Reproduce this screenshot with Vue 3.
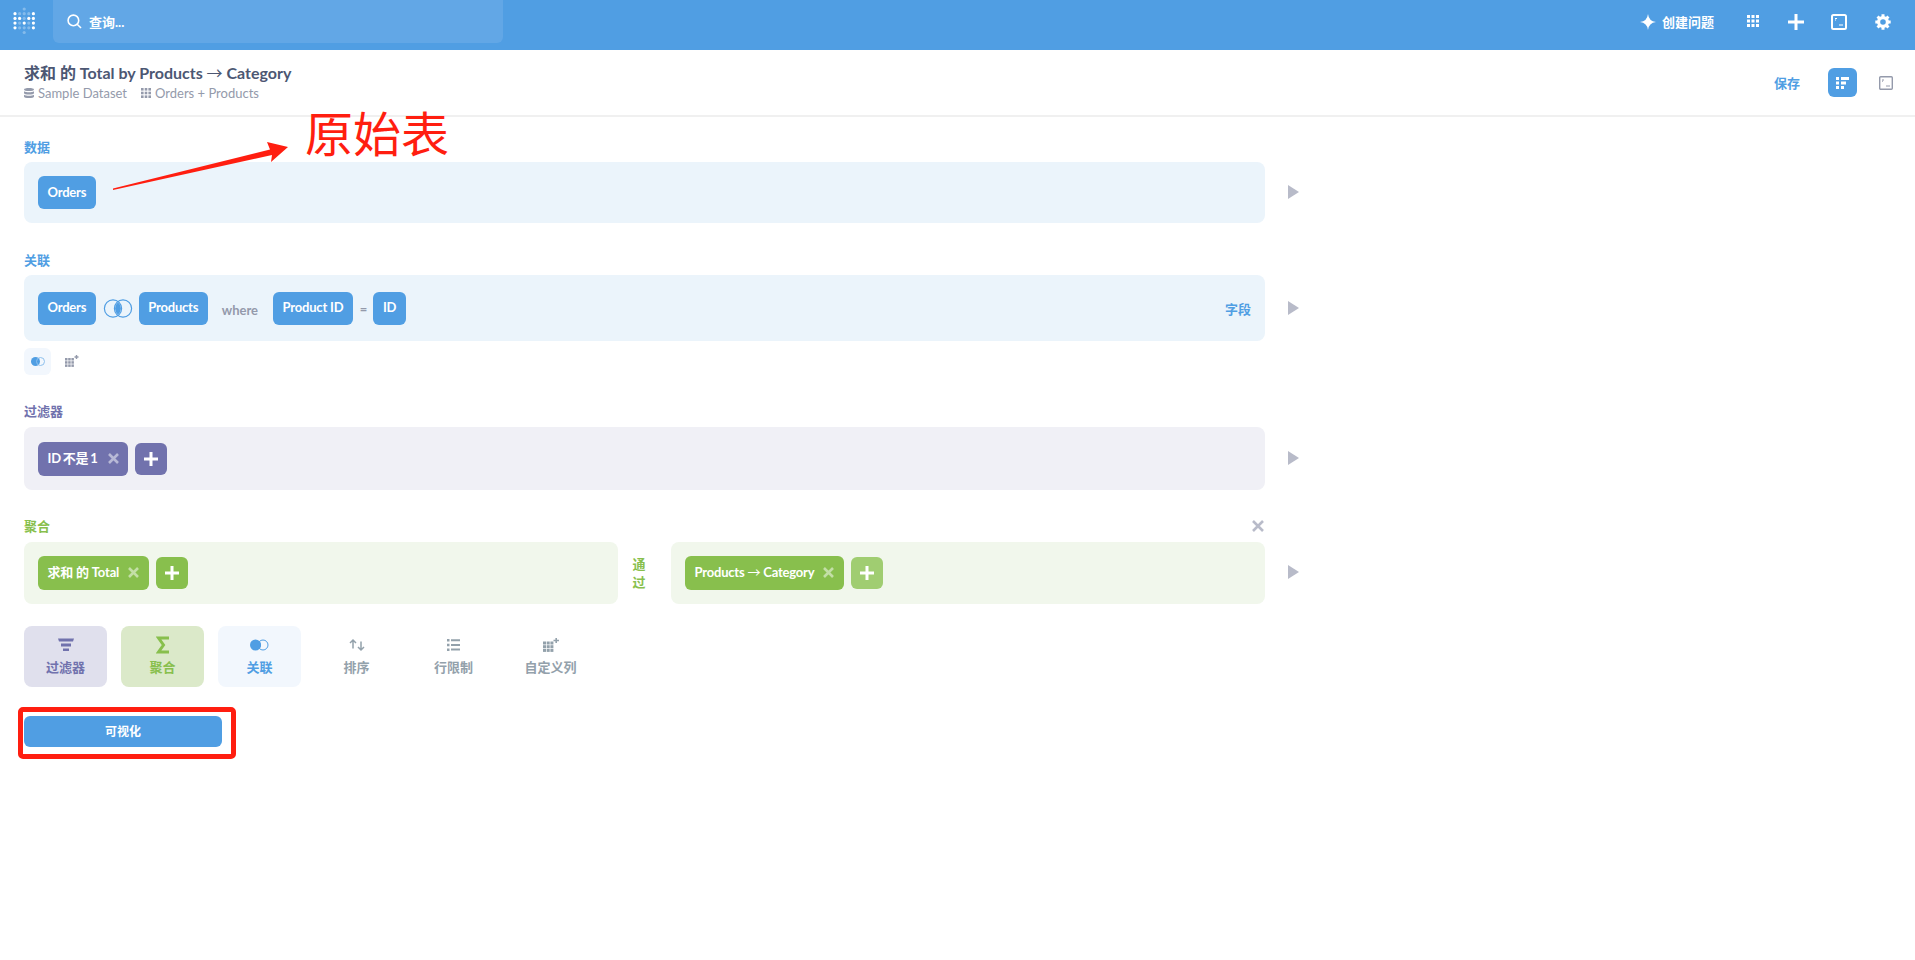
<template>
  <div class="page">
    <nav class="nav">
      <svg class="logo" width="24" height="30" viewBox="0 0 24 30">
        <circle v-for="d in logoDots" :key="d.x + '-' + d.y" :cx="d.x" :cy="d.y" r="1.6" fill="#fff" :opacity="d.o" />
      </svg>
      <div class="search">
        <svg width="15" height="15" viewBox="0 0 15 15" fill="none" stroke="#fff" stroke-width="1.6">
          <circle cx="6.4" cy="6.4" r="5.3" />
          <path d="M10.2 10.2 14 14" />
        </svg>
        <span>查询...</span>
      </div>
      <div class="nav-right">
        <svg class="spark" width="16" height="16" viewBox="0 0 16 16"><path d="M8 0Q8.800 7.200 16 8 8.800 8.800 8 16 7.200 8.800 0 8 7.200 7.200 8 0Z" fill="#fff" /></svg>
        <span class="ask">创建问题</span>
        <svg class="nav-grid" width="13" height="13" viewBox="0 0 13 13">
          <rect v-for="c in grid3" :key="c.k" :x="c.x" :y="c.y" width="3" height="3" fill="#fff" />
        </svg>
        <svg class="nav-plus" width="16" height="16" viewBox="0 0 16 16"><path d="M6.500 0h3v6.500H16v3H9.500V16h-3V9.500H0v-3h6.500z" fill="#fff" /></svg>
        <svg class="nav-sql" width="16" height="16" viewBox="0 0 16 16" fill="none">
          <rect x="1" y="1" width="14" height="14" rx="1.500" stroke="#fff" stroke-width="2" />
          <path d="M4 4.500h2M4 6h1M8 11h4" stroke="#fff" stroke-width="1.200" />
        </svg>
        <svg class="nav-gear" width="16" height="16" viewBox="0 0 16 16" fill="none" stroke="#fff">
          <circle cx="8" cy="8" r="4.400" stroke-width="3.200" />
          <path v-for="a in gearAngles" :key="a" d="M8 .3V3.500M8 12.500V15.700" stroke-width="3" :transform="'rotate(' + a + ' 8 8)'" />
        </svg>
      </div>
    </nav>

    <header class="head">
      <div>
        <h1 class="title">求和 的 Total by Products <span class="arr">→</span> Category</h1>
        <div class="sub">
          <svg width="10" height="10" viewBox="0 0 10 10"><path d="M0 1.500C0 .5 2.200 0 5 0s5 .5 5 1.500S7.800 3 5 3 0 2.500 0 1.500zM0 3.200C1 4 3 4.300 5 4.300S9 4 10 3.200v1.800C10 6 7.800 6.500 5 6.500S0 6 0 5zM0 6.700C1 7.500 3 7.800 5 7.800S9 7.500 10 6.700v1.800C10 9.500 7.800 10 5 10S0 9.500 0 8.500z" fill="#949aab" /></svg>
          <span>Sample Dataset</span>
          <svg class="sub-grid" width="10" height="10" viewBox="0 0 10 10">
            <rect v-for="c in grid3sub" :key="c.k" :x="c.x" :y="c.y" width="2.600" height="2.600" fill="#949aab" />
          </svg>
          <span>Orders + Products</span>
        </div>
      </div>
      <div class="head-right">
        <span class="save">保存</span>
        <button class="notebook-toggle">
          <svg width="13" height="12" viewBox="0 0 13 12">
            <path d="M0 0h3v3H0zM5 0h8v3H5zM0 4.500h3v3H0zM5 4.500h5v3H5zM0 9h3v3H0zM5 9h3v3H5z" fill="#fff" />
          </svg>
        </button>
        <svg class="head-sql" width="14" height="14" viewBox="0 0 14 14" fill="none">
          <rect x=".7" y=".7" width="12.600" height="12.600" rx="1" stroke="#949aab" stroke-width="1.400" />
          <path d="M3 4h2M3 5.200h1M7 10h4" stroke="#949aab" stroke-width="1" />
        </svg>
      </div>
    </header>

    <main class="main">
      <svg class="note-arrow" width="180" height="55" viewBox="0 0 180 55">
        <path d="M0 48.500 157 9.500 154 2 175 7 158 22 159 15 0 50Z" fill="#ff1e10" />
      </svg>
      <span class="note-text">原始表</span>

      <section>
        <div class="label blue">数据</div>
        <div class="row">
          <div class="panel bg-blue data-panel">
            <span class="pill blue-pill">Orders</span>
          </div>
          <span class="play"></span>
        </div>
      </section>

      <section class="sec-join">
        <div class="label blue">关联</div>
        <div class="row">
          <div class="panel bg-blue join-panel">
            <span class="pill blue-pill">Orders</span>
            <svg class="venn" width="30" height="19" viewBox="0 0 30 19">
              <path d="M15 3.200a8.200 8.200 0 0 1 0 12.600 8.200 8.200 0 0 1 0-12.600z" fill="#509ee3" />
              <circle cx="10" cy="9.500" r="8.600" fill="none" stroke="#509ee3" stroke-width="1.200" />
              <circle cx="20" cy="9.500" r="8.600" fill="none" stroke="#509ee3" stroke-width="1.200" />
            </svg>
            <span class="pill blue-pill">Products</span>
            <span class="where">where</span>
            <span class="pill blue-pill">Product ID</span>
            <span class="eq">=</span>
            <span class="pill blue-pill">ID</span>
            <span class="fields">字段</span>
          </div>
          <span class="play"></span>
        </div>
        <div class="tools">
          <button class="tool-btn">
            <svg width="14" height="9" viewBox="0 0 14 9">
              <circle cx="4.500" cy="4.500" r="4.500" fill="#509ee3" />
              <circle cx="9.500" cy="4.500" r="4" fill="none" stroke="#8dc0ed" stroke-width="1" />
            </svg>
          </button>
          <svg class="tool-grid" width="14" height="13" viewBox="0 0 14 13">
            <rect v-for="c in gridPlus" :key="c.k" :x="c.x" :y="c.y" width="2.500" height="2.500" fill="#949aab" />
            <path d="M9.500 2h4M11.500 0v4" stroke="#949aab" stroke-width="1.400" />
          </svg>
        </div>
      </section>

      <section class="sec-filter">
        <div class="label purple">过滤器</div>
        <div class="row">
          <div class="panel bg-purple filter-panel">
            <span class="pill tall tight purple-pill">ID 不是 1
              <svg class="x" width="11" height="11" viewBox="0 0 11 11"><path d="M1 1 10 10M10 1 1 10" stroke="#fff" stroke-width="2.600" /></svg>
            </span>
            <span class="plus purple-pill">
              <svg width="14" height="14" viewBox="0 0 14 14"><path d="M5.500 0h3v5.500H14v3H8.500V14h-3V8.500H0v-3h5.500z" fill="#fff" /></svg>
            </span>
          </div>
          <span class="play"></span>
        </div>
      </section>

      <section class="sec-sum">
        <div class="sum-top">
          <div class="label green">聚合</div>
          <svg class="sum-close" width="12" height="12" viewBox="0 0 12 12"><path d="M1 1 11 11M11 1 1 11" stroke="#b8bbc9" stroke-width="2.600" /></svg>
        </div>
        <div class="row">
          <div class="sum-cols">
            <div class="panel bg-green sum-left">
              <span class="pill tall green-pill">求和 的 Total
                <svg class="x" width="11" height="11" viewBox="0 0 11 11"><path d="M1 1 10 10M10 1 1 10" stroke="#fff" stroke-width="2.600" /></svg>
              </span>
              <span class="plus green-pill">
                <svg width="14" height="14" viewBox="0 0 14 14"><path d="M5.500 0h3v5.500H14v3H8.500V14h-3V8.500H0v-3h5.500z" fill="#fff" /></svg>
              </span>
            </div>
            <div class="by">通过</div>
            <div class="panel bg-green sum-right">
              <span class="pill tall green-pill">Products <span class="arr">→</span> Category
                <svg class="x" width="11" height="11" viewBox="0 0 11 11"><path d="M1 1 10 10M10 1 1 10" stroke="#fff" stroke-width="2.600" /></svg>
              </span>
              <span class="plus light-green">
                <svg width="14" height="14" viewBox="0 0 14 14"><path d="M5.500 0h3v5.500H14v3H8.500V14h-3V8.500H0v-3h5.500z" fill="#fff" /></svg>
              </span>
            </div>
          </div>
          <span class="play"></span>
        </div>
      </section>

      <div class="actions">
        <div class="act act-filter">
          <svg width="16" height="14" viewBox="0 0 16 14"><path d="M0 .5h16L15 3.500H1zM3 5.500h10v3H3zM5 10.500h6v2.500H5z" fill="#7172ad" /></svg>
          <span>过滤器</span>
        </div>
        <div class="act act-sum">
          <svg width="14" height="17" viewBox="0 0 14 17"><path d="M13 1.500H2.500L7.500 8.500 2.500 15.500H13" fill="none" stroke="#88bf4d" stroke-width="3" /></svg>
          <span>聚合</span>
        </div>
        <div class="act act-join">
          <svg width="19" height="11" viewBox="0 0 19 11">
            <circle cx="5.500" cy="5.500" r="5.500" fill="#509ee3" />
            <circle cx="13" cy="5.500" r="5" fill="none" stroke="#509ee3" stroke-width="1" />
            <path d="M9.500 1.900a5 5 0 0 1 0 7.200z" fill="#509ee3" />
          </svg>
          <span>关联</span>
        </div>
        <div class="act act-plain">
          <svg width="16" height="13" viewBox="0 0 16 13" fill="none" stroke="#93a1ab" stroke-width="1.500">
            <path d="M4 10V1.500M1 4.500 4 1.500 7 4.500M12 3v8.500M9 8.500l3 3 3-3" />
          </svg>
          <span>排序</span>
        </div>
        <div class="act act-plain">
          <svg width="13" height="12" viewBox="0 0 13 12">
            <path d="M0 0h2.500v2.500H0zM4 .2h9v2H4zM0 4.700h2.500v2.500H0zM4 4.900h9v2H4zM0 9.400h2.500v2.500H0zM4 9.600h9v2H4z" fill="#93a1ab" />
          </svg>
          <span>行限制</span>
        </div>
        <div class="act act-plain">
          <svg width="16" height="14" viewBox="0 0 16 14">
            <rect v-for="c in gridAct" :key="c.k" :x="c.x" :y="c.y" width="3" height="3" fill="#93a1ab" />
            <path d="M10.500 2.500H16M13.200 0v5" stroke="#93a1ab" stroke-width="1.600" />
          </svg>
          <span>自定义列</span>
        </div>
      </div>

      <div class="vis-wrap">
        <button class="vis">可视化</button>
        <span class="vis-mark"></span>
      </div>
    </main>
  </div>
</template>

<script setup>
function makeGrid(step, offsetY = 0) {
  const out = []
  for (let r = 0; r < 3; r++) {
    for (let c = 0; c < 3; c++) {
      out.push({ k: r + '-' + c, x: c * step, y: offsetY + r * step })
    }
  }
  return out
}

const grid3 = makeGrid(4.5)
const grid3sub = makeGrid(3.7)
const gridPlus = makeGrid(3.2, 3)
const gridAct = makeGrid(3.7, 3.5)
const gearAngles = [0, 45, 90, 135]

// metabase logo, faded dots are the ones not in the M
const logoRows = [
  [0, 0, 0.3, 0, 0],
  [1, 0.3, 0.3, 0.3, 1],
  [1, 1, 0.3, 1, 1],
  [1, 0.3, 1, 0.3, 1],
  [1, 0.3, 0.3, 0.3, 1],
  [0, 0, 0.3, 0, 0]
]
const logoDots = []
logoRows.forEach((row, r) => {
  row.forEach((o, c) => {
    if (o) logoDots.push({ x: 2 + c * 4.6, y: 2 + r * 4.7, o })
  })
})
</script>

<style>
html, body {
  margin: 0;
  background: #fff;
}
</style>

<style scoped>
.page {
  font-family: Lato, "Noto Sans CJK SC", sans-serif;
  color: #4c5773;
  min-height: 960px;
}
.nav {
  height: 50px;
  background: #509ee3;
  display: flex;
  align-items: flex-start;
}
.logo {
  margin: 7px 0 0 13px;
}
.search {
  margin-left: 16px;
  width: 450px;
  height: 43px;
  box-sizing: border-box;
  background: #62a7e6;
  border-radius: 0 0 6px 6px;
  padding: 0 0 1px 14px;
  display: flex;
  align-items: center;
  gap: 7px;
  color: #fff;
  font-size: 13px;
  font-weight: 700;
}
.nav-right {
  margin-left: auto;
  display: flex;
  align-items: center;
  height: 43px;
  color: #fff;
  padding-right: 24px;
}
.ask {
  font-size: 13px;
  font-weight: 700;
  margin-left: 6px;
}
.nav-grid {
  margin-left: 33px;
}
.nav-plus {
  margin-left: 28px;
}
.nav-sql {
  margin-left: 27px;
}
.nav-gear {
  margin-left: 28px;
}
.head {
  height: 65px;
  border-bottom: 2px solid #f0f0f0;
  display: flex;
  justify-content: space-between;
  align-items: flex-start;
  padding: 0 22px 0 24px;
}
.title {
  margin: 12px 0 0;
  font-size: 16px;
  line-height: 20px;
  font-weight: 700;
  color: #4c5773;
}
.arr {
  font-family: "Noto Sans CJK SC", sans-serif;
  font-weight: 400;
}
.sub {
  margin-top: 2px;
  display: flex;
  align-items: center;
  font-size: 13px;
  line-height: 16px;
  font-weight: 400;
  color: #949aab;
}
.sub span {
  margin-left: 4px;
}
.sub-grid {
  margin-left: 14px;
}
.head-right {
  display: flex;
  align-items: center;
  margin-top: 18px;
}
.save {
  color: #509ee3;
  font-size: 13px;
  font-weight: 700;
  margin-right: 28px;
}
.notebook-toggle {
  width: 29px;
  height: 29px;
  padding: 0;
  border: 0;
  border-radius: 6px;
  background: #509ee3;
  display: flex;
  align-items: center;
  justify-content: center;
}
.head-sql {
  margin-left: 22px;
}
.main {
  position: relative;
  padding: 22px 0 0 24px;
}
.note-arrow {
  position: absolute;
  left: 113px;
  top: 23px;
}
.note-text {
  position: absolute;
  left: 305px;
  top: -13px;
  color: #ff1e10;
  font-size: 48px;
  line-height: 60px;
  white-space: nowrap;
  font-weight: 400;
}
.label {
  font-size: 13px;
  font-weight: 700;
  line-height: 16px;
}
.blue { color: #509ee3; }
.purple { color: #7172ad; }
.green { color: #88bf4d; }
.row {
  display: flex;
  align-items: center;
}
.panel {
  box-sizing: border-box;
  border-radius: 8px;
  display: flex;
  align-items: center;
  padding: 0 14px;
  font-size: 13px;
}
.bg-blue { background: #ebf4fb; }
.bg-purple { background: #f0f0f6; }
.bg-green { background: #f1f7ec; }
.play {
  margin: 6px 0 0 23px;
  width: 0;
  height: 0;
  border-left: 11px solid #b8bbc9;
  border-top: 7px solid transparent;
  border-bottom: 7px solid transparent;
}
.pill {
  height: 33px;
  box-sizing: border-box;
  padding: 0 9.500px 2px;
  border-radius: 6px;
  color: #fff;
  font-size: 13px;
  font-weight: 700;
  letter-spacing: -0.2px;
  display: inline-flex;
  align-items: center;
  white-space: nowrap;
}
.tall {
  height: 34px;
  display: inline-block;
  line-height: 32px;
  padding-bottom: 0;
}
.tight {
  word-spacing: -1px;
}
.blue-pill { background: #509ee3; }
.purple-pill { background: #7172ad; }
.green-pill { background: #88bf4d; }
.light-green { background: #a0cd71; }
.x {
  margin-left: 6px;
  vertical-align: -1px;
  opacity: 0.5;
}
.tight .x {
  margin-left: 8px;
}
.plus {
  width: 32px;
  height: 32px;
  border-radius: 6px;
  margin-left: 7px;
  display: flex;
  align-items: center;
  justify-content: center;
  flex-shrink: 0;
}
.data-panel {
  width: 1241px;
  height: 61px;
  margin-top: 7px;
}
.sec-join {
  margin-top: 29px;
}
.join-panel {
  width: 1241px;
  height: 66px;
  margin-top: 7px;
}
.venn {
  margin: 0 6px 0 7px;
}
.where {
  margin: 4px 15px 0 14px;
  color: #949aab;
  font-size: 13px;
  font-weight: 700;
}
.eq {
  margin: 2px 6px 0 7px;
  color: #949aab;
  font-size: 13px;
  font-weight: 700;
}
.fields {
  margin-left: auto;
  color: #509ee3;
  font-weight: 700;
}
.tools {
  margin-top: 7px;
  display: flex;
  align-items: center;
}
.tool-btn {
  width: 27px;
  height: 27px;
  padding: 0;
  border: 0;
  border-radius: 6px;
  background: #f2f7fd;
  display: flex;
  align-items: center;
  justify-content: center;
}
.tool-grid {
  margin-left: 14px;
}
.sec-filter {
  margin-top: 28px;
}
.filter-panel {
  width: 1241px;
  height: 63px;
  margin-top: 8px;
}
.sec-sum {
  margin-top: 28px;
}
.sum-top {
  width: 1241px;
  display: flex;
  justify-content: space-between;
  align-items: center;
}
.sum-close {
  margin-right: 1px;
}
.sum-cols {
  width: 1241px;
  display: flex;
  align-items: center;
  margin-top: 8px;
}
.sum-left {
  width: 594px;
  height: 62px;
}
.by {
  width: 14px;
  margin: 0 25px 0 14px;
  color: #88bf4d;
  font-size: 13px;
  line-height: 18px;
  font-weight: 700;
  text-align: center;
}
.sum-right {
  flex: 1;
  height: 62px;
}
.actions {
  display: flex;
  gap: 14px;
  margin-top: 22px;
}
.act {
  width: 83px;
  height: 61px;
  box-sizing: border-box;
  padding-top: 10px;
  border-radius: 8px;
  display: flex;
  flex-direction: column;
  align-items: center;
  gap: 3px;
  font-size: 13px;
  font-weight: 700;
}
.act svg {
  height: 18px;
}
.act-filter {
  background: #e0e0ed;
  color: #7172ad;
}
.act-sum {
  background: #dbe9c9;
  color: #88bf4d;
}
.act-join {
  background: #f2f7fd;
  color: #509ee3;
}
.act-plain {
  color: #93a1ab;
}
.vis-wrap {
  position: relative;
  width: 198px;
  margin-top: 29px;
}
.vis {
  display: block;
  width: 198px;
  height: 31px;
  border: 0;
  border-radius: 6px;
  background: #509ee3;
  color: #fff;
  font-family: inherit;
  font-size: 12px;
  font-weight: 700;
  padding: 0 0 2px;
}
.vis-mark {
  position: absolute;
  left: -6px;
  top: -9px;
  width: 218px;
  height: 52px;
  box-sizing: border-box;
  border: 5px solid #ff1e10;
  border-radius: 5px;
}
</style>
